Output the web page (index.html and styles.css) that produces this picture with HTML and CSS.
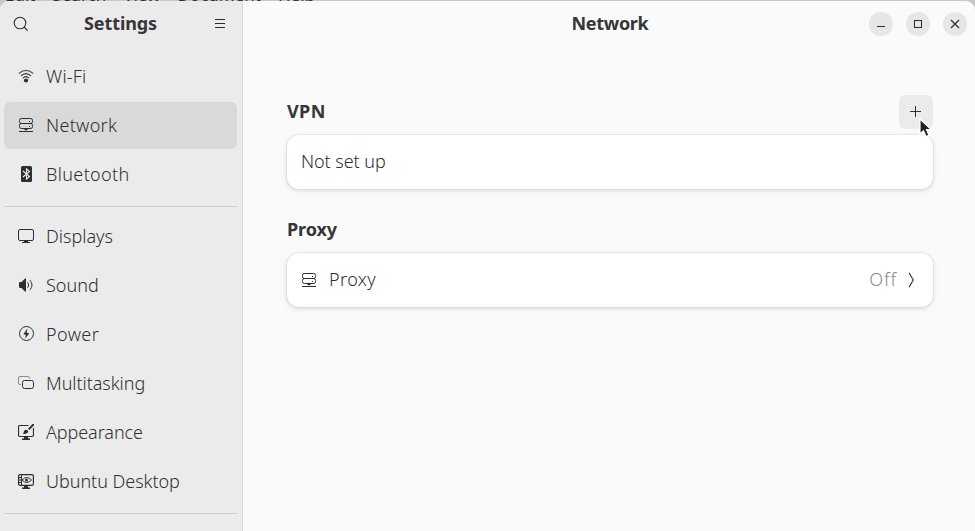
FILE: index.html
```
<!DOCTYPE html>
<html lang="en">
<head>
<meta charset="utf-8">
<title>Settings</title>
<link rel="stylesheet" href="styles.css">
</head>
<body>
<svg width="0" height="0" class="defs" aria-hidden="true">
  <symbol id="server" viewBox="0 0 16 16"><g fill="none" stroke="currentColor"><rect x="1.5" y="1.5" width="13" height="5" rx="1.8"/><rect x="1.5" y="6.5" width="13" height="5" rx="1.8"/><path d="M1 14.5h14M8 11.5v2M6.5 12.5h3M11 4.500h1M11 9.500h1"/></g></symbol>
</svg>
<div class="backdrop"><span>Edit</span><span>Search</span><span>View</span><span>Document</span><span>Help</span></div>
<div class="window">
  <aside class="sidebar">
    <header class="side-head">
      <svg class="icon" viewBox="0 0 16 16"><g fill="none" stroke="currentColor" stroke-width="1.1"><circle cx="7" cy="7" r="5.8"/><path d="M11 11l3.6 3.6"/></g></svg>
      <h1 class="t-settings">Settings</h1>
      <svg class="icon" viewBox="0 0 16 16"><path d="M3 3.5h10M3 7.5h10M3 11.5h10" stroke="currentColor" fill="none"/></svg>
    </header>
    <nav>
      <a class="row"><svg class="icon" viewBox="0 0 16 16"><g fill="none" stroke="currentColor" stroke-width="1.200"><path d="M.8 5.500Q8-.8 15.200 5.500" opacity=".75"/><path d="M3 7.900Q8 3.200 13 7.900"/><path d="M5 10.200Q8 7 11 10.200"/></g><circle cx="8" cy="12.500" r="2.100" fill="currentColor"/></svg><span class="t-wifi">Wi-Fi</span></a>
      <a class="row selected"><svg class="icon"><use href="#server"/></svg><span class="t-network">Network</span></a>
      <a class="row"><svg class="icon" viewBox="0 0 16 16"><rect x="3" y="0" width="11" height="16" rx="1.500" fill="currentColor"/><path d="M5 5l6.500 5.500L8.500 13V3l3 2.500L5 11" fill="none" stroke="#ebebeb" stroke-width="1.100"/></svg><span class="t-bluetooth">Bluetooth</span></a>
      <hr>
      <a class="row"><svg class="icon" viewBox="0 0 16 16"><rect x=".5" y="1.500" width="15" height="11" rx="1.500" fill="none" stroke="currentColor"/><path d="M6 13h4v1h2v1H4v-1h2z" fill="currentColor"/></svg><span class="t-displays">Displays</span></a>
      <a class="row"><svg class="icon" viewBox="0 0 16 16"><path d="M1 6q0-1 1-1h1.500L7 1.500h1v13H7L3.500 11H2q-1 0-1-1z" fill="currentColor"/><g fill="none" stroke="currentColor"><path d="M9.700 5.200q2 2.800 0 5.600"/><path d="M12 3.200q4 4.800 0 9.600"/></g></svg><span class="t-sound">Sound</span></a>
      <a class="row"><svg class="icon" viewBox="0 0 16 16"><circle cx="8.500" cy="7.500" r="7" fill="none" stroke="currentColor"/><path d="M9.300 2.500L5.300 8.500h2.500l-.4 4 4-5.500H8.800z" fill="currentColor"/></svg><span class="t-power">Power</span></a>
      <a class="row"><svg class="icon" viewBox="0 0 16 16"><path d="M3 9.500H2Q.5 9.500.5 8V3Q.5 1.500 2 1.500h8q1.500 0 1.500 1.500v.5" fill="none" stroke="currentColor" opacity=".5"/><rect x="4.500" y="5.500" width="11" height="8" rx="2" fill="none" stroke="currentColor"/></svg><span class="t-multi">Multitasking</span></a>
      <a class="row"><svg class="icon" viewBox="0 0 16 16"><path d="M10.500 1.500H2Q.5 1.500.5 3v8q0 1.500 1.500 1.500h12q1.500 0 1.500-1.500V4" fill="none" stroke="currentColor" stroke-width="1.200"/><path d="M6 13h4v1.500h2V16H4v-1.500h2zM5 10c1-1 .2-3 2-4q1.500-.8 3 .8c.8 2-1.500 3.200-5 3.200zM10 4.800L14.500 0H16v1.200L11.500 6z" fill="currentColor"/></svg><span class="t-appear">Appearance</span></a>
      <a class="row"><svg class="icon" viewBox="0 0 16 16"><rect x=".6" y="1.600" width="14.800" height="10.800" rx="1.500" fill="none" stroke="currentColor" stroke-width="1.200"/><path d="M3.500 2v10M1 4.500h2M1 7h2M1 9.500h2M4 7q4.800-5 9.500 0q-4.700 5-9.500 0" fill="none" stroke="currentColor"/><circle cx="8.500" cy="7" r="1.500" fill="currentColor"/><path d="M6 13h4v1.500h2V16H4v-1.500h2z" fill="currentColor"/></svg><span class="t-ubuntu">Ubuntu Desktop</span></a>
      <hr>
    </nav>
  </aside>
  <main class="content">
    <header class="main-head">
      <h1 class="t-title">Network</h1>
      <div class="controls">
        <button aria-label="Minimize"><svg class="icon" viewBox="0 0 16 16"><path d="M4 10.500h8" stroke="currentColor"/></svg></button>
        <button aria-label="Maximize"><svg class="icon" viewBox="0 0 16 16"><rect x="4.500" y="4.500" width="7" height="7" fill="none" stroke="currentColor"/></svg></button>
        <button aria-label="Close"><svg class="icon" viewBox="0 0 16 16"><path d="M4 4l8 8M12 4l-8 8" stroke="currentColor" stroke-width="1.200"/></svg></button>
      </div>
    </header>
    <section>
      <div class="group-head"><h2 class="t-vpn">VPN</h2>
        <button class="add" aria-label="Add"><svg class="icon" viewBox="0 0 16 16"><path d="M2 7.500h11M7.500 2v11" stroke="currentColor"/></svg>
        <svg class="pointer" viewBox="0 0 14 20"><path d="M1 1v15l3.500-3.300L7 18.500l3-1.300-2.500-5.500h5z" fill="#222" stroke="#fff" stroke-width="1.200"/></svg></button>
      </div>
      <div class="card"><span class="t-notset">Not set up</span></div>
    </section>
    <section>
      <div class="group-head"><h2 class="t-proxyh">Proxy</h2></div>
      <div class="card"><svg class="icon"><use href="#server"/></svg><span class="label t-proxy">Proxy</span><span class="value t-off">Off</span><svg class="icon chev" viewBox="0 0 16 16"><path d="M6 .8L10.200 8L6 15.200" fill="none" stroke="currentColor" stroke-width="1.100"/></svg></div>
    </section>
  </main>
</div>
</body>
</html>
```
FILE: styles.css
```
* { box-sizing: border-box; }
body { margin: 0; width: 975px; height: 531px; overflow: hidden; background: #c8c8c8; color: #303030; font-family: "Noto Sans", "Open Sans", sans-serif; font-size: 18px; font-weight: 360; line-height: 24px; }
h1, h2 { margin: 0; padding-bottom: 2px; font-size: 18px; font-weight: 700; color: #363636; }
.defs { position: absolute; }
.icon { width: 16px; height: 16px; flex: none; display: block; color: #2e2e2e; }
.backdrop { position: absolute; left: 5px; top: -17px; height: 24px; display: flex; gap: 17px; font-size: 17px; font-weight: 400; line-height: 24px; }
.window { position: relative; margin-top: 1px; height: 530px; display: flex; border-radius: 9px 9px 0 0; overflow: hidden; background: #fafafa; }
.sidebar { width: 243px; flex: none; background: #ebebeb; border-right: 1px solid #d9d9d9; }
.side-head { height: 46px; padding: 0 14px 0 13px; display: flex; align-items: center; justify-content: space-between; }
nav { padding: 6px 5px 0 4px; }
.row { display: flex; align-items: center; gap: 12px; height: 47px; margin-bottom: 2px; padding: 0 0 2px 14px; border-radius: 6px; }
.row span { white-space: nowrap; }
.selected { background: #d9d9d9; }
hr { border: 0; height: 1px; background: #cfcfcf; margin: 8px 0 6px; }
.content { flex: 1; }
.main-head { height: 46px; display: grid; grid-template-columns: 1fr auto 1fr; align-items: center; padding: 0 8px; }
.main-head h1 { grid-column: 2; padding-left: 2px; }
.controls { display: flex; justify-content: flex-end; gap: 13px; }
button { border: 0; padding: 0; display: grid; place-items: center; }
.controls button { width: 24px; height: 24px; border-radius: 50%; background: #e6e6e6; }
section { margin: 0 42px 0 44px; }
.main-head + section { margin-top: 48px; }
section + section { margin-top: 24px; }
.group-head { display: flex; align-items: center; justify-content: space-between; height: 34px; margin-bottom: 6px; }
.add { position: relative; width: 34px; height: 34px; border-radius: 6px; background: #ebebeb; }
.pointer { position: absolute; left: 20px; top: 23px; width: 14px; height: 20px; }
.card { height: 54px; display: flex; align-items: center; background: #fff; border-radius: 12px; padding: 0 14px 1px; box-shadow: 0 0 0 1px #00000009, 0 1px 3px 1px #00000014, 0 2px 6px 2px #00000008; }
.label { margin-left: 12px; padding-bottom: 1px; }
.value { margin-left: auto; padding-bottom: 1px; color: #8c8c8c; }
.chev { margin-left: 6px; }
.t-settings { letter-spacing: -.1px; }
.t-title { letter-spacing: -.3px; }
.t-wifi { letter-spacing: .2px; }
.t-network { letter-spacing: .3px; }
.t-bluetooth { letter-spacing: .35px; }
.t-power, .t-proxy { letter-spacing: .4px; }
.t-multi { letter-spacing: -.05px; }
.t-appear { letter-spacing: -.08px; }
.t-ubuntu { letter-spacing: -.04px; }
.t-notset { padding-bottom: 1px; letter-spacing: -.06px; }
.t-proxyh { letter-spacing: -.1px; }
.t-vpn { letter-spacing: .4px; }
.t-off { letter-spacing: .9px; }
```
